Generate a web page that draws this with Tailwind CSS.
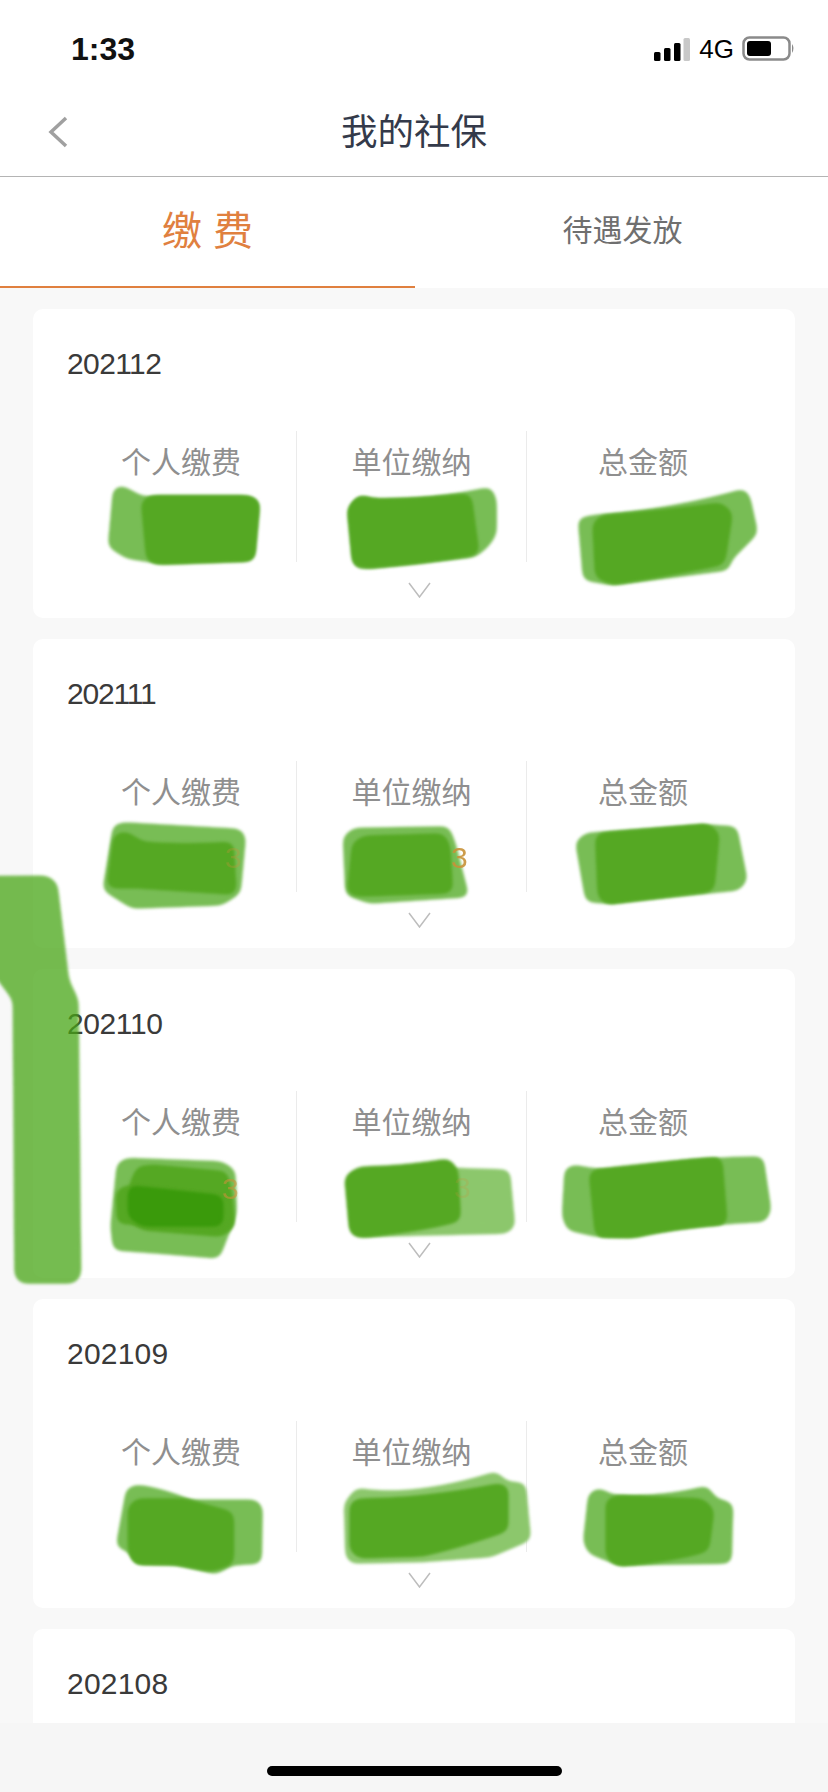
<!doctype html>
<html>
<head>
  <meta charset="UTF-8">
  <meta name="viewport" content="width=device-width, initial-scale=1.0">
  <script src="https://cdn.jsdelivr.net/npm/@tailwindcss/browser@4"></script>
</head>
<body class="relative w-[828px] h-[1792px] overflow-hidden bg-[#f6f6f6] font-['Liberation_Sans','Noto_Sans_CJK_SC',sans-serif]">

 <!-- status bar -->
 <div class="flex items-center justify-between h-[98px] pl-[71px] pr-[32px] bg-white">
   <span class="text-[32px] leading-none font-bold text-[#111]">1:33</span>
   <div class="flex items-center">
     <svg class="w-[36px] h-[24px] mt-[2px]" viewBox="0 0 36 24">
       <rect x="0" y="14" width="6.500" height="9" rx="1.500" fill="#000"/>
       <rect x="10" y="10" width="6.500" height="13" rx="1.500" fill="#000"/>
       <rect x="20" y="5" width="6.500" height="18" rx="1.500" fill="#000"/>
       <rect x="29.500" y="0" width="6.500" height="23" rx="1.500" fill="#c8c8c8"/>
     </svg>
     <span class="ml-[9px] text-[26px] leading-none font-medium text-black">4G</span>
     <svg class="ml-[8px] w-[54px] h-[26px]" viewBox="0 0 54 26">
       <rect x="1.500" y="1.500" width="46" height="22" rx="6" fill="none" stroke="#8a8a8a" stroke-width="2.500"/>
       <rect x="5" y="5" width="24" height="15" rx="3" fill="#000"/>
       <path d="M50 8q3 4 0 9z" fill="#8a8a8a"/>
     </svg>
   </div>
 </div>

 <!-- title -->
 <header class="relative flex items-center justify-center h-[79px] pb-[8px] bg-white border-b border-[#b4b4b4]">
   <svg class="absolute left-[48px] top-[18px] w-[21px] h-[32px]" viewBox="0 0 21 32">
     <path d="M18 2 3 16l15 14" fill="none" stroke="#a0a0a0" stroke-width="3.500"/>
   </svg>
   <span class="text-[36.500px] leading-none text-[#343a4a]">我的社保</span>
 </header>

 <!-- tabs -->
 <div class="flex h-[111px] bg-white">
   <div class="w-[415px] flex items-center justify-center border-b-2 border-[#e0803f] pb-[1px]">
     <span class="text-[40px] leading-none text-[#e0803f] whitespace-pre">缴 费</span>
   </div>
   <div class="flex-1 flex items-center justify-center pb-[4px] pl-[2px]">
     <span class="text-[30px] leading-none text-[#6f6f6f]">待遇发放</span>
   </div>
 </div>

 <!-- list -->
 <main class="h-[1435px] overflow-hidden bg-[#f8f8f8] pl-[33px] pr-[33px] pt-[21px] flex flex-col gap-[21px]">

   <section class="shrink-0 h-[309px] rounded-[10px] bg-white">
     <div class="pt-[38px] pl-[34px] h-[72px] text-[30px] leading-[34px] tracking-[-0.6px] text-[#3a3a3a]">202112</div>
     <div class="mt-[50px] ml-[33px] flex h-[131px]">
       <div class="w-[231px] pt-[17px] text-center text-[30px] leading-[30px] text-[#8f8f8f] border-r border-[#ebebeb]">个人缴费</div>
       <div class="w-[230px] pt-[17px] text-center text-[30px] leading-[30px] text-[#8f8f8f] border-r border-[#ebebeb]">单位缴纳</div>
       <div class="w-[232px] pt-[17px] text-center text-[30px] leading-[30px] text-[#8f8f8f]">总金额</div>
     </div>
     <svg class="mt-[20px] ml-[375px] w-[23px] h-[16px]" viewBox="0 0 23 16"><path d="M1 1l10.500 14L22 1" fill="none" stroke="#bdbdbd" stroke-width="1.500"/></svg>
   </section>

   <section class="shrink-0 h-[309px] rounded-[10px] bg-white">
     <div class="pt-[38px] pl-[34px] h-[72px] text-[30px] leading-[34px] tracking-[-1.2px] text-[#3a3a3a]">202111</div>
     <div class="mt-[50px] ml-[33px] flex h-[131px]">
       <div class="w-[231px] pt-[17px] text-center text-[30px] leading-[30px] text-[#8f8f8f] border-r border-[#ebebeb]">个人缴费</div>
       <div class="w-[230px] pt-[17px] text-center text-[30px] leading-[30px] text-[#8f8f8f] border-r border-[#ebebeb]">单位缴纳</div>
       <div class="w-[232px] pt-[17px] text-center text-[30px] leading-[30px] text-[#8f8f8f]">总金额</div>
     </div>
     <svg class="mt-[20px] ml-[375px] w-[23px] h-[16px]" viewBox="0 0 23 16"><path d="M1 1l10.500 14L22 1" fill="none" stroke="#bdbdbd" stroke-width="1.500"/></svg>
   </section>

   <section class="shrink-0 h-[309px] rounded-[10px] bg-white">
     <div class="pt-[38px] pl-[34px] h-[72px] text-[30px] leading-[34px] tracking-[-0.4px] text-[#3a3a3a]">202110</div>
     <div class="mt-[50px] ml-[33px] flex h-[131px]">
       <div class="w-[231px] pt-[17px] text-center text-[30px] leading-[30px] text-[#8f8f8f] border-r border-[#ebebeb]">个人缴费</div>
       <div class="w-[230px] pt-[17px] text-center text-[30px] leading-[30px] text-[#8f8f8f] border-r border-[#ebebeb]">单位缴纳</div>
       <div class="w-[232px] pt-[17px] text-center text-[30px] leading-[30px] text-[#8f8f8f]">总金额</div>
     </div>
     <svg class="mt-[20px] ml-[375px] w-[23px] h-[16px]" viewBox="0 0 23 16"><path d="M1 1l10.500 14L22 1" fill="none" stroke="#bdbdbd" stroke-width="1.500"/></svg>
   </section>

   <section class="shrink-0 h-[309px] rounded-[10px] bg-white">
     <div class="pt-[38px] pl-[34px] h-[72px] text-[30px] leading-[34px] tracking-[0.2px] text-[#3a3a3a]">202109</div>
     <div class="mt-[50px] ml-[33px] flex h-[131px]">
       <div class="w-[231px] pt-[17px] text-center text-[30px] leading-[30px] text-[#8f8f8f] border-r border-[#ebebeb]">个人缴费</div>
       <div class="w-[230px] pt-[17px] text-center text-[30px] leading-[30px] text-[#8f8f8f] border-r border-[#ebebeb]">单位缴纳</div>
       <div class="w-[232px] pt-[17px] text-center text-[30px] leading-[30px] text-[#8f8f8f]">总金额</div>
     </div>
     <svg class="mt-[20px] ml-[375px] w-[23px] h-[16px]" viewBox="0 0 23 16"><path d="M1 1l10.500 14L22 1" fill="none" stroke="#bdbdbd" stroke-width="1.500"/></svg>
   </section>

   <section class="shrink-0 h-[309px] rounded-[10px] bg-white">
     <div class="pt-[38px] pl-[34px] h-[72px] text-[30px] leading-[34px] tracking-[0.2px] text-[#3a3a3a]">202108</div>
   </section>
 </main>

 <!-- home indicator -->
 <div class="flex justify-center pt-[43px]">
   <div class="w-[295px] h-[10px] rounded-full bg-black"></div>
 </div>

 <!-- green scribbles painted over the amounts -->
 <svg class="absolute left-0 top-0 w-[828px] h-[1792px] pointer-events-none" viewBox="0 0 828 1792">
   <defs>
     <!-- rounds off the corners, then leaves a soft brush edge -->
     <filter id="brush" x="-20%" y="-20%" width="140%" height="140%" color-interpolation-filters="sRGB">
       <feGaussianBlur stdDeviation="9 14"/>
       <feComponentTransfer>
         <feFuncA type="linear" slope="10" intercept="-4"/>
       </feComponentTransfer>
       <feGaussianBlur stdDeviation="3.500 5"/>
     </filter>
     <!-- same, a little fatter, for the darker second pass -->
     <filter id="brushd" x="-20%" y="-20%" width="140%" height="140%" color-interpolation-filters="sRGB">
       <feGaussianBlur stdDeviation="9 14"/>
       <feComponentTransfer>
         <feFuncA type="linear" slope="10" intercept="-3"/>
       </feComponentTransfer>
       <feGaussianBlur stdDeviation="3 4.500"/>
     </filter>
   </defs>
   <g transform="translate(0,300) scale(0.528,0.3333)">
     <path filter="url(#brush)" fill="#78bd55" d="M205 740 215 565 232 558 270 590 480 590 490 605 480 780 300 790 240 775Z"/>
     <path filter="url(#brushd)" fill="#55a823" d="M270 605 285 590 470 590 490 605 480 780 300 790 280 780Z"/>
     <path filter="url(#brush)" fill="#78bd55" d="M660 625 680 585 710 600Q820 600 930 562L940 600 940 700Q930 740 900 770L700 805 672 805Z"/>
     <path filter="url(#brushd)" fill="#55a823" d="M660 625 680 590 710 600Q800 600 890 585L905 760Q800 790 700 800L670 795Z"/>
     <path filter="url(#brush)" fill="#78bd55" d="M1095 655 1130 645Q1270 630 1410 567L1420 590 1435 700 1385 780 1380 810 1160 855 1105 840Z"/>
     <path filter="url(#brushd)" fill="#55a823" d="M1125 670 1140 650Q1260 635 1365 612L1385 640 1370 790Q1250 830 1160 850L1130 830Z"/>
   </g>
   <g transform="translate(0,780) scale(0.528,0.3333)">
     <path filter="url(#brush)" fill="#78bd55" d="M195 330 215 135 235 128 455 148 465 170 455 340 420 375 250 385Z"/>
     <path filter="url(#brushd)" fill="#55a823" d="M205 320 218 165 240 160 270 190Q350 200 440 190L445 340 260 320Z"/>
     <path filter="url(#brush)" fill="#78bd55" d="M650 170 670 145 850 140 862 190 888 350 700 370 655 345Z"/>
     <path filter="url(#brushd)" fill="#55a823" d="M670 190 690 172 840 165 850 200 855 335 685 345 660 340Z"/>
     <path filter="url(#brush)" fill="#78bd55" d="M1090 185 1110 160 1340 135 1395 140 1415 300 1400 330 1150 370 1110 365Z"/>
     <path filter="url(#brushd)" fill="#55a823" d="M1130 165 1160 160 1340 135 1360 160 1350 330 1150 370 1135 350Z"/>

     <path filter="url(#brush)" fill="#78bd55" d="M222 1150 240 1135 420 1145 445 1170 448 1300 415 1435 300 1420 215 1410 210 1340Z"/>
     <path filter="url(#brush)" fill="#55a823" d="M245 1215 260 1160 290 1155 430 1175 440 1250 445 1340 420 1370 270 1350 240 1320Z"/>
     <path filter="url(#brush)" fill="#55a823" d="M220 1230 245 1215 430 1250 430 1335 420 1345 270 1335 222 1330Z"/>
     <path filter="url(#brushd)" fill="#3a9a0b" d="M245 1220 420 1250 420 1335 270 1335 245 1310Z"/>
     <path filter="url(#brush)" fill="#8cc76c" d="M660 1180 860 1165 965 1170 975 1340 960 1360 690 1370 665 1360Z"/>
     <path filter="url(#brushd)" fill="#55a823" d="M655 1190 680 1165Q780 1160 850 1140L865 1170 870 1320Q800 1350 680 1370L665 1360Z"/>
     <path filter="url(#brush)" fill="#78bd55" d="M1070 1165 1090 1155Q1130 1175 1200 1165 1320 1130 1445 1130L1460 1290 1450 1325Q1300 1335 1200 1370L1130 1370 1075 1350 1065 1310Z"/>
     <path filter="url(#brushd)" fill="#55a823" d="M1118 1175Q1240 1150 1365 1135L1375 1330Q1280 1340 1200 1370L1130 1368Z"/>
   </g>
   <g transform="translate(0,1400) scale(0.528,0.3333)">
     <path filter="url(#brush)" fill="#78bd55" d="M240 265 260 255Q310 265 360 300L485 300 497 320 495 490 440 495 410 522 335 495 255 492 245 455 220 440Z"/>
     <path filter="url(#brushd)" fill="#55a823" d="M245 320 260 300 350 300 440 340 440 490 400 510 330 490 255 490 245 450Z"/>
     <path filter="url(#brush)" fill="#8cc76c" d="M652 310 675 265 700 270Q800 285 940 215L960 245 995 250 1005 420 930 470 800 485 665 490 655 470Z"/>
     <path filter="url(#brushd)" fill="#55a823" d="M665 310 680 300Q800 300 945 255L960 260 960 390Q870 440 800 465L680 470 665 450Z"/>
     <path filter="url(#brush)" fill="#78bd55" d="M1115 280 1135 265 1160 285Q1250 295 1340 258L1355 295 1388 310 1385 490 1170 495 1115 460 1105 425Z"/>
     <path filter="url(#brushd)" fill="#55a823" d="M1150 300 1170 290Q1250 295 1330 300L1350 330 1340 450Q1280 480 1170 495L1150 470Z"/>
   </g>
   <!-- long stroke down the left edge, goes off the screen -->
   <g transform="translate(0,780) scale(0.528,0.3333)" opacity="0.75">
     <path filter="url(#brush)" fill="#48a616" d="M-60 290 90 288 108 310 130 600 148 660 153 1490 140 1510 40 1510 28 1490 25 660 -60 480Z"/>
   </g>
   <g fill="#c89238" font-size="30" font-family="Liberation Sans">
     <text x="225" y="868" opacity="0.3">3</text>
     <text x="451" y="868" opacity="0.9">3</text>
     <text x="222" y="1199" opacity="0.6">3</text>
     <text x="454" y="1198" opacity="0.2">3</text>
   </g>
 </svg>
</body>
</html>
